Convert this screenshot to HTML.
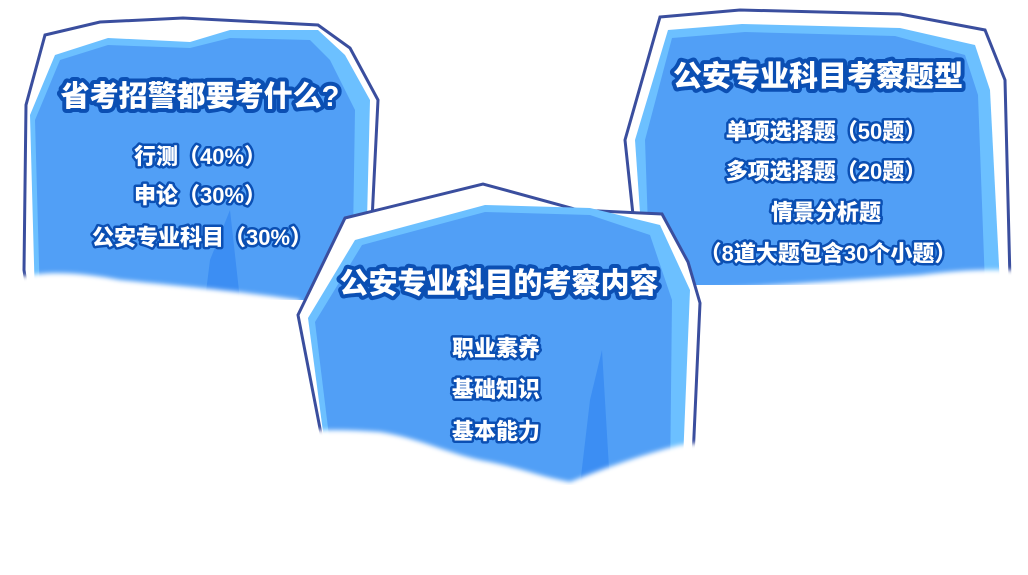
<!DOCTYPE html>
<html><head><meta charset="utf-8"><style>
html,body{margin:0;padding:0;background:#fff;width:1028px;height:575px;overflow:hidden}
svg text{font-family:"Liberation Sans","Noto Sans CJK SC",sans-serif;font-weight:900;fill:#fff;stroke:#0b4fb3;stroke-linejoin:round;paint-order:stroke;text-anchor:middle}
.t{font-size:29px;stroke-width:8px}
.s{font-size:22px;stroke-width:5px}
</style></head><body>
<svg width="1028" height="575" viewBox="0 0 1028 575" xmlns="http://www.w3.org/2000/svg">
<defs><filter id="b" x="-20%" y="-50%" width="140%" height="200%"><feGaussianBlur stdDeviation="2.5"/></filter></defs>
<polygon points="45,35 100,22 183,18 318,25 350,48 378,100 372,220 365,310 30,310 24,270 26,105" fill="#fff" stroke="#3a4e9e" stroke-width="3"/>
<polygon points="55,55 108,38 190,42 230,30 318,30 345,55 370,100 365,300 35,300 30,115" fill="#6cc0ff"/>
<polygon points="60,60 108,45 190,48 230,38 310,40 330,60 355,110 352,300 40,300 35,120" fill="#519ff6"/>
<polygon points="210,260 230,210 240,300 205,300" fill="#3c8ef3"/>
<polygon points="660,17 740,10 900,14 985,30 1005,80 1010,280 640,280 625,140" fill="#fff" stroke="#3a4e9e" stroke-width="3"/>
<polygon points="668,30 742,24 900,28 975,45 990,90 1000,285 645,285 635,140" fill="#6cc0ff"/>
<polygon points="672,38 745,32 895,36 965,55 978,95 985,285 650,285 645,140" fill="#519ff6"/>
<g fill="#fff" filter="url(#b)">
<path d="M0,285 C30,268 80,272 120,280 C170,285 230,290 300,300 L300,320 L0,320 Z"/>
<path d="M700,290 C780,285 850,280 920,275 C960,270 1000,268 1028,272 L1028,300 L700,300 Z"/>
</g>
<rect x="0" y="305" width="1028" height="270" fill="#fff"/>
<polygon points="345,218 483,184 578,210 662,214 688,262 700,303 692,480 330,480 298,315" fill="#fff" stroke="#3a4e9e" stroke-width="3"/>
<polygon points="355,240 485,205 590,208 660,225 690,290 682,485 330,485 308,318" fill="#6cc0ff"/>
<polygon points="362,245 485,212 590,215 650,235 672,300 670,485 335,485 315,322" fill="#519ff6"/>
<polygon points="590,400 602,350 610,485 580,485" fill="#3c8ef3"/>
<g fill="#fff" filter="url(#b)">
<path d="M250,440 C290,430 330,428 380,432 C420,438 450,455 490,462 C520,468 545,478 570,482 C600,470 640,455 680,445 C720,440 760,440 800,445 L800,575 L250,575 Z"/>
</g>
<rect x="240" y="492" width="580" height="83" fill="#fff"/>
<text class="t" x="200" y="106">省考招警都要考什么?</text>
<text class="s" x="200" y="164">行测（40%）</text>
<text class="s" x="200" y="203">申论（30%）</text>
<text class="s" x="202" y="245">公安专业科目（30%）</text>
<text class="t" x="818" y="86">公安专业科目考察题型</text>
<text class="s" x="826" y="139">单项选择题（50题）</text>
<text class="s" x="826" y="179">多项选择题（20题）</text>
<text class="s" x="826" y="220">情景分析题</text>
<text class="s" x="828" y="261">（8道大题包含30个小题）</text>
<text class="t" x="499" y="293">公安专业科目的考察内容</text>
<text class="s" x="496" y="356">职业素养</text>
<text class="s" x="496" y="397">基础知识</text>
<text class="s" x="496" y="439">基本能力</text>
</svg>
</body></html>
